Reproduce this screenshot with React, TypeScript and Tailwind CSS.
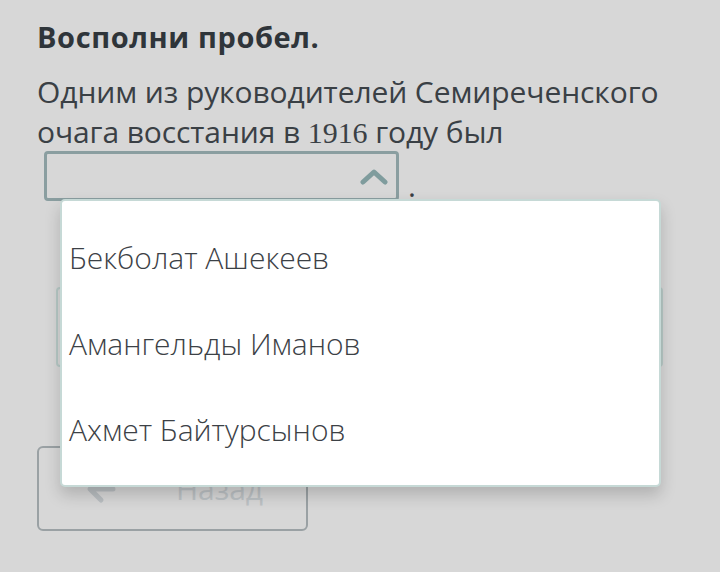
import { useState } from "react";

const options = ["Бекболат Ашекеев", "Амангельды Иманов", "Ахмет Байтурсынов"];

function ChevronUp() {
  return (
    <svg width="28" height="18" viewBox="0 0 28 18" className="shrink-0">
      <path d="M3 15 L14 5 L25 15" fill="none" stroke="#7f9c9d" strokeWidth="5" strokeLinecap="round" strokeLinejoin="round" />
    </svg>
  );
}

function BackArrow() {
  return (
    <svg width="40" height="36" viewBox="0 0 40 36" className="shrink-0">
      <path d="M30 18 H8 M18 7 L7 18 L18 29" fill="none" stroke="#b9bec1" strokeWidth="5" strokeLinecap="round" strokeLinejoin="round" />
    </svg>
  );
}

export default function App() {
  const [open] = useState(true);

  return (
    <div className="min-h-screen w-full bg-[#d7d7d7] text-[#33393e]" style={{ fontFamily: '"Open Sans", "Noto Sans", sans-serif' }}>
      <div className="px-[37px] pt-[17px]">
        <h2 className="text-[29px] font-bold leading-[40px] tracking-[0.6px] text-[#2f353a]">Восполни пробел.</h2>

        <div className="relative mt-[15px] text-[30px] leading-[40px] text-[#3a4045]">
          <p className="tracking-[-0.1px]">
            Одним из руководителей Семиреченского очага восстания в{" "}
            <span style={{ fontFamily: '"Liberation Serif", serif' }}>1916</span> году был
          </p>

          <div className="-mt-[2px] flex items-end pl-[7px]">
            <div className="flex h-[50px] w-[355px] items-center justify-end rounded-[4px] border-[3px] border-[#8a9ea0] pr-[8px]">
              <ChevronUp />
            </div>
            <span className="ml-[9px] leading-[30px]">.</span>
          </div>

          {/* field hidden behind the open list */}
          <div className="ml-[19px] mt-[86px] h-[80px] w-[607px] rounded-[4px] border-2 border-[#b7c9c6]" />

          {open ? (
            <ul className="absolute left-[23px] top-[127px] z-10 w-[601px] rounded-[5px] border-2 border-[#c6d9d6] bg-white pb-[12px] pt-[14px] shadow-[0_8px_16px_rgba(0,0,0,0.18)]">
              {options.map((option) => (
                <li key={option} className="flex h-[86px] items-center px-[7px] text-[30px] font-light text-[#3c4146]">
                  {option}
                </li>
              ))}
            </ul>
          ) : null}
        </div>

        <button
          type="button"
          className="mt-[79px] flex h-[85px] w-[271px] items-center rounded-[6px] border-2 border-[#9aa1a4] pl-[44px] text-[30px] text-[#bcc1c4]"
        >
          <BackArrow />
          <span className="flex-1 pl-[10px] text-center">Назад</span>
        </button>
      </div>
    </div>
  );
}
